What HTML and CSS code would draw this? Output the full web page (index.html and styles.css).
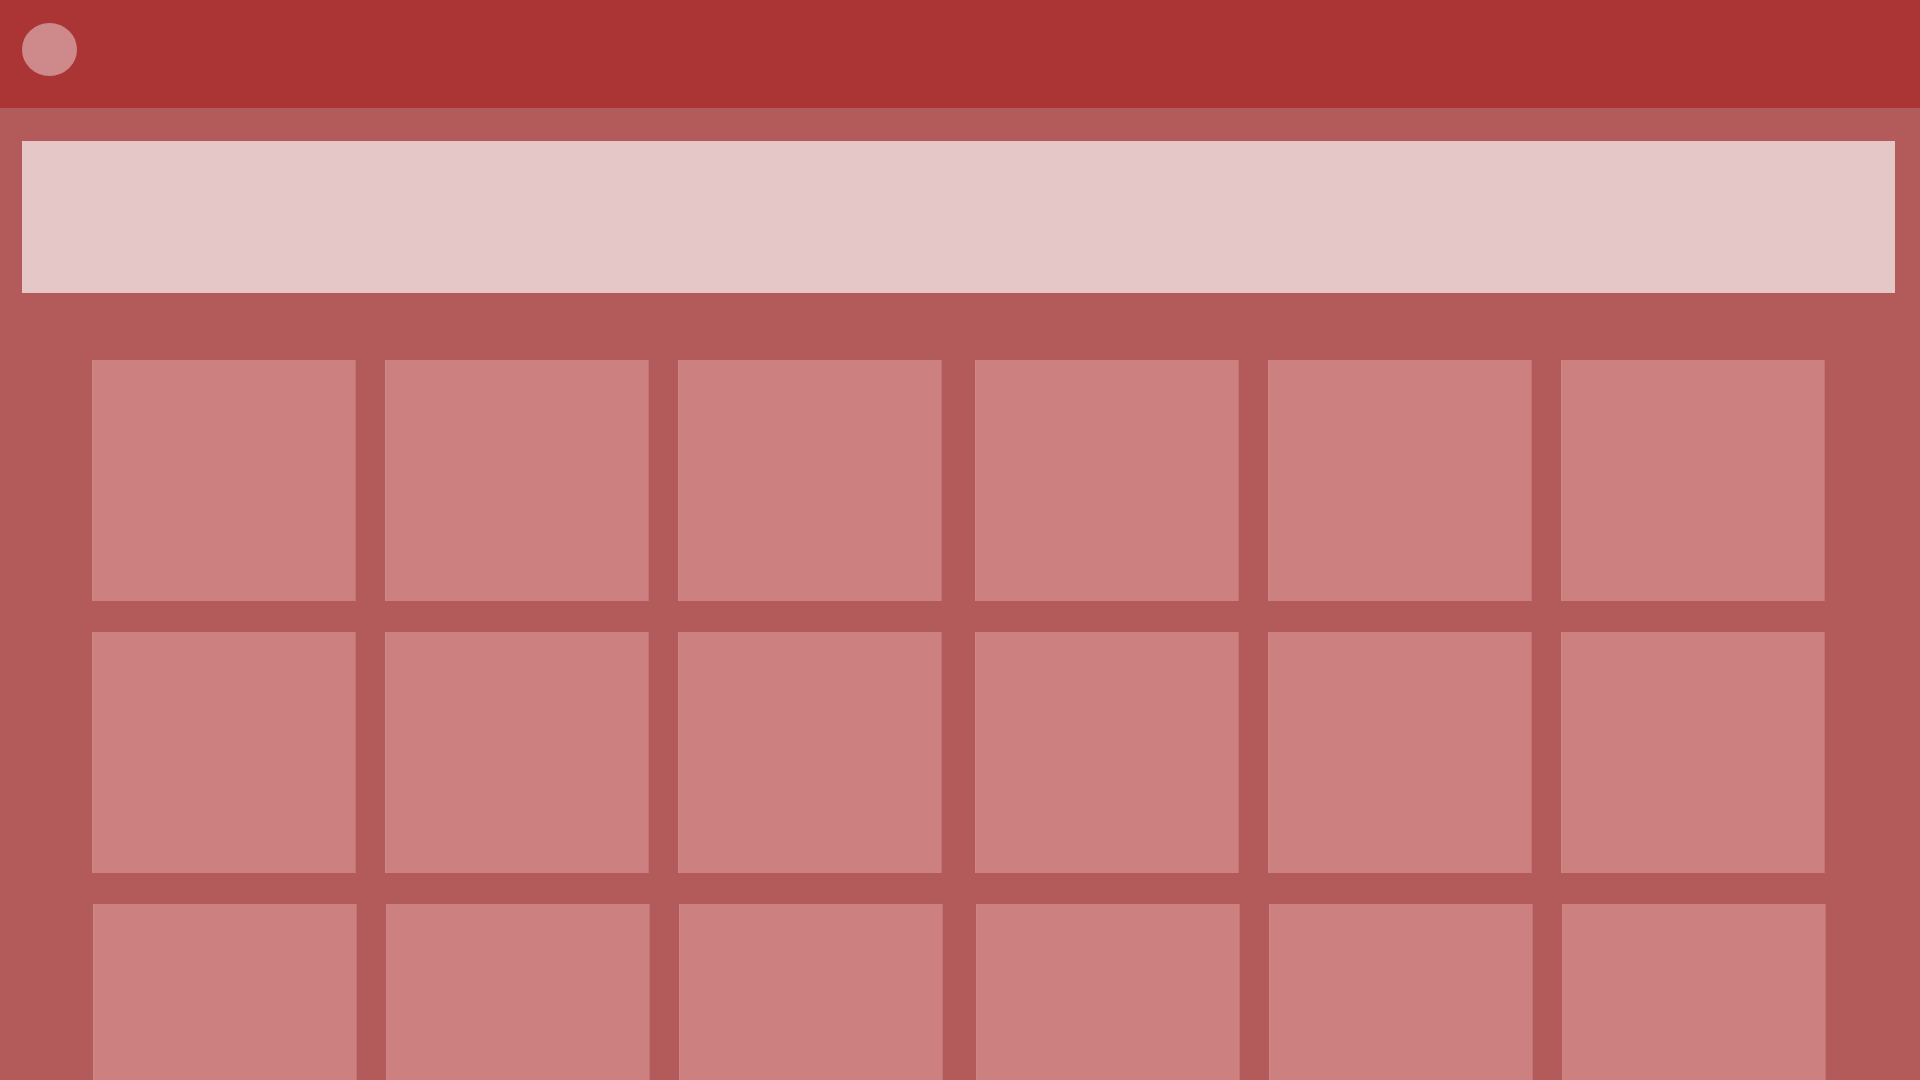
FILE: index.html
```html
<!DOCTYPE html>
<html lang="en">
<head>
<meta charset="utf-8">
<title>Gallery</title>
<link rel="stylesheet" href="styles.css">
</head>
<body>
<header class="topbar">
  <div class="avatar"></div>
</header>
<main class="content">
  <div class="search"></div>
  <section class="gallery">
    <div class="group">
      <div class="tile"></div><div class="tile"></div><div class="tile"></div>
      <div class="tile"></div><div class="tile"></div><div class="tile"></div>
      <div class="tile shift"></div><div class="tile shift"></div><div class="tile shift"></div>
    </div>
    <div class="group">
      <div class="tile"></div><div class="tile"></div><div class="tile"></div>
      <div class="tile"></div><div class="tile"></div><div class="tile"></div>
      <div class="tile shift"></div><div class="tile shift"></div><div class="tile shift"></div>
    </div>
  </section>
</main>
</body>
</html>
```

FILE: styles.css
```css
html, body {
  margin: 0;
  padding: 0;
  height: 100%;
  overflow: hidden;
}

body {
  background: #b35a5a;
  font-family: "Liberation Sans", Arial, sans-serif;
}

.topbar {
  height: 108px;
  box-sizing: border-box;
  background: #ab3435;
  padding: 23px 22px 0;
  display: flex;
  align-items: flex-start;
}

.avatar {
  width: 55px;
  height: 53px;
  border-radius: 50%;
  background: #ce8a8a;
}

.content {
  padding: 33px 25px 0 22px;
}

.search {
  height: 152px;
  background: #e5c7c8;
  box-sizing: border-box;
  border-bottom: 1px solid #ecc3c3;
}

.gallery {
  margin-top: 67px;
  padding-left: 70px;
  display: flex;
  gap: 33px;
}

.group {
  display: grid;
  grid-template-columns: repeat(3, 264px);
  grid-auto-rows: 241px;
  column-gap: 29px;
  row-gap: 31px;
}

.tile {
  background: #cd8080;
  box-shadow: inset 1px 0 0 #d08686, inset -1px 0 0 #c27474;
}

.tile.shift {
  transform: translateX(1px);
}
```
